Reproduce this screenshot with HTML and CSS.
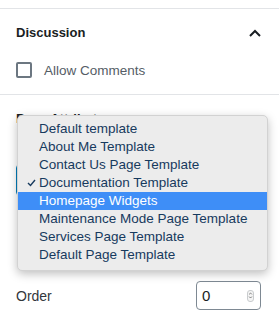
FILE: index.html
```html
<!DOCTYPE html>
<html lang="en">
<head>
    <meta charset="UTF-8">
    <title>Document settings</title>
    <link rel="stylesheet" href="styles.css">
</head>
<body>
    <div class="sidebar">
        <div class="panel panel-top"></div>

        <div class="panel">
            <div class="panel-header">
                <span>Discussion</span>
                <svg class="chevron" width="14" height="10" viewBox="0 0 14 10">
                    <polyline points="2,8 7,3 12,8" />
                </svg>
            </div>
            <label class="check-row">
                <span class="checkbox"></span>
                Allow Comments
            </label>
        </div>

        <div class="panel panel-attrs">
            <div class="panel-header">
                <span>Page Attributes</span>
                <svg class="chevron" width="14" height="10" viewBox="0 0 14 10">
                    <polyline points="2,8 7,3 12,8" />
                </svg>
            </div>
            <div class="select-box"></div>

            <div class="order-row">
                <span class="order-label">Order</span>
                <div class="number-input">
                    <span>0</span>
                    <span class="spinner">
                        <svg width="7" height="11" viewBox="0 0 7 11">
                            <polyline points="1.5,4 3.5,2 5.5,4" />
                            <polyline points="1.5,7 3.5,9 5.5,7" />
                        </svg>
                    </span>
                </div>
            </div>

            <!-- open template menu -->
            <ul class="menu">
                <li>Default template</li>
                <li>About Me Template</li>
                <li>Contact Us Page Template</li>
                <li class="checked">
                    <svg class="tick" width="9" height="8" viewBox="0 0 9 8">
                        <polyline points="1,4 3.5,6.5 8,1" />
                    </svg>
                    Documentation Template
                </li>
                <li class="active">Homepage Widgets</li>
                <li>Maintenance Mode Page Template</li>
                <li>Services Page Template</li>
                <li>Default Page Template</li>
            </ul>
        </div>
    </div>
</body>
</html>
```

FILE: styles.css
```css
* {
    margin: 0;
    padding: 0;
    box-sizing: border-box;
}

body {
    font-family: "Liberation Sans", Arial, sans-serif;
    font-size: 13px;
    color: #191e23;
    background-color: white;
}

.panel {
    border-bottom: 1px solid #e2e4e7;
}

.panel-top {
    height: 9px;
}

.panel-header {
    display: flex;
    align-items: center;
    justify-content: space-between;
    height: 47px;
    padding: 0 16px;
    font-weight: bold;
    font-size: 13px;
}

.chevron {
    margin-right: 1px;
}

.chevron polyline {
    fill: none;
    stroke: #191e23;
    stroke-width: 2;
}

.check-row {
    display: flex;
    align-items: center;
    gap: 12px;
    padding: 6px 16px 16px;
    color: #555d66;
    font-size: 13.5px;
}

.checkbox {
    width: 16px;
    height: 16px;
    border: 2px solid #6c7781;
    border-radius: 2px;
}

.panel-attrs {
    position: relative;
    border-bottom: none;
    padding-bottom: 20px;
}

.select-box {
    margin: 22px 16px 0;
    height: 32px;
    border: 1px solid #007cba;
    border-radius: 4px;
}

.order-row {
    display: flex;
    align-items: center;
    justify-content: space-between;
    margin-top: 85px;
    padding: 0 18px 0 16px;
}

.order-label {
    color: #32373c;
    font-size: 14px;
}

.number-input {
    display: flex;
    align-items: center;
    justify-content: space-between;
    width: 65px;
    height: 29px;
    border: 1px solid #7e8993;
    border-radius: 4px;
    padding: 0 6px 0 5px;
    font-size: 15px;
    color: #191e23;
}

.spinner {
    display: flex;
    align-items: center;
    justify-content: center;
    width: 7px;
    height: 12px;
    border: 1px solid #c9ccce;
    border-radius: 3px;
    background-color: #f4f4f4;
}

.spinner polyline {
    fill: none;
    stroke: #555;
    stroke-width: 1;
}

.menu {
    list-style: none;
    position: absolute;
    top: 20px;
    left: 17px;
    width: 251px;
    padding: 4px 0 6px;
    background-color: #ececec;
    border: 1px solid #d2d2d2;
    border-radius: 5px;
    box-shadow: 0 3px 10px rgba(0, 0, 0, 0.25);
    font-size: 13.5px;
    color: #173a5e;
}

.menu li {
    position: relative;
    height: 18px;
    line-height: 18px;
    padding-left: 21px;
}

.menu li.active {
    background-color: #3e8ef7;
    color: white;
}

.tick {
    position: absolute;
    left: 9px;
    top: 5px;
}

.tick polyline {
    fill: none;
    stroke: #173a5e;
    stroke-width: 1.4;
}
```
